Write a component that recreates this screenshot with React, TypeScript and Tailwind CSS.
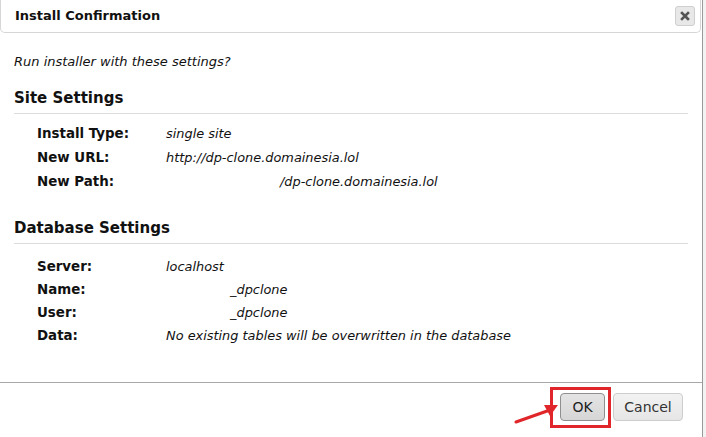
import React from "react";

const font = { fontFamily: '"DejaVu Sans", Verdana, sans-serif' };

interface Row {
  label: string;
  value: string;
  indent?: string;
}

const siteRows: Row[] = [
  { label: "Install Type:", value: "single site" },
  { label: "New URL:", value: "http://dp-clone.domainesia.lol" },
  { label: "New Path:", value: "/dp-clone.domainesia.lol", indent: "pl-[114px]" },
];

const dbRows: Row[] = [
  { label: "Server:", value: "localhost" },
  { label: "Name:", value: "_dpclone", indent: "pl-[64px]" },
  { label: "User:", value: "_dpclone", indent: "pl-[64px]" },
  { label: "Data:", value: "No existing tables will be overwritten in the database" },
];

const SettingsRows = ({ rows, rowClass }: { rows: Row[]; rowClass: string }) => (
  <div className="pl-[23px]">
    {rows.map((r) => (
      <div key={r.label} className={`flex items-baseline ${rowClass}`}>
        <div className="w-[129px] font-bold text-[13.4px] text-[#111]">{r.label}</div>
        <div className={`italic text-[12.9px] text-[#111] ${r.indent ?? ""}`}>{r.value}</div>
      </div>
    ))}
  </div>
);

export default function App() {
  return (
    <div className="relative w-[706px] h-[437px] bg-[#f2f2f2] overflow-hidden flex" style={font}>
      <div className="w-[703px] h-full bg-white border-r border-[#9a9a9a] flex flex-col">
        {/* title bar */}
        <div className="h-[33px] border-b border-l border-r border-[#d6d6d6] rounded-b-[5px] mr-[1px] flex items-center justify-between pl-[14px] pr-[5px]">
          <span className="font-bold text-[13px] text-[#111] leading-none -mt-[2px]">Install Confirmation</span>
          <button className="w-[20px] h-[20px] -mt-[1px] rounded-[3px] border border-[#cfcfcf] bg-[#e8e8e8] flex items-center justify-center">
            <svg width="10" height="10" viewBox="0 0 10 10">
              <path d="M2 2 L8 8 M8 2 L2 8" stroke="#555" strokeWidth="2.6" strokeLinecap="square" />
            </svg>
          </button>
        </div>

        {/* body */}
        <div className="flex-1 pl-[14px] pr-[14px]">
          <div className="mt-[21px] h-[16px] leading-[16px] italic text-[13px] text-[#111]">
            Run installer with these settings?
          </div>

          <div className="mt-[18px] h-[26px] leading-[20px] pb-[5px] border-b border-[#dcdcdc] font-bold text-[15px] text-[#111]">
            Site Settings
          </div>
          <div className="mt-[8px]">
            <SettingsRows rows={siteRows} rowClass="h-[24px] leading-[24px]" />
          </div>

          <div className="mt-[24px] h-[26px] leading-[20px] pb-[5px] border-b border-[#dcdcdc] font-bold text-[15px] text-[#111]">
            Database Settings
          </div>
          <div className="mt-[11px]">
            <SettingsRows rows={dbRows} rowClass="h-[23px] leading-[23px]" />
          </div>
        </div>

        {/* footer */}
        <div className="h-[55px] border-t border-[#a8a8a8] flex justify-end gap-[8px] pt-[10px] pr-[19px]">
          <button className="w-[45px] h-[28px] rounded-[4px] border border-[#8f8f8f] bg-gradient-to-b from-[#e4e4e4] to-[#d6d6d6] text-[14px] text-[#222]">
            OK
          </button>
          <button className="w-[70px] h-[28px] rounded-[4px] border border-[#cdcdcd] bg-gradient-to-b from-[#f2f2f2] to-[#e6e6e6] text-[14px] text-[#333]">
            Cancel
          </button>
        </div>
      </div>

      {/* annotation: red box + arrow */}
      <div className="absolute left-[550px] top-[387px] w-[61px] h-[41px] border-[3px] border-[#e0262a]" />
      <svg className="absolute left-[510px] top-[396px]" width="52" height="32" viewBox="0 0 52 32">
        <path d="M6 26 L40 14" stroke="#e0262a" strokeWidth="3" strokeLinecap="round" />
        <path d="M48 9 L34 9 L40 20 Z" fill="#e0262a" />
      </svg>
    </div>
  );
}
